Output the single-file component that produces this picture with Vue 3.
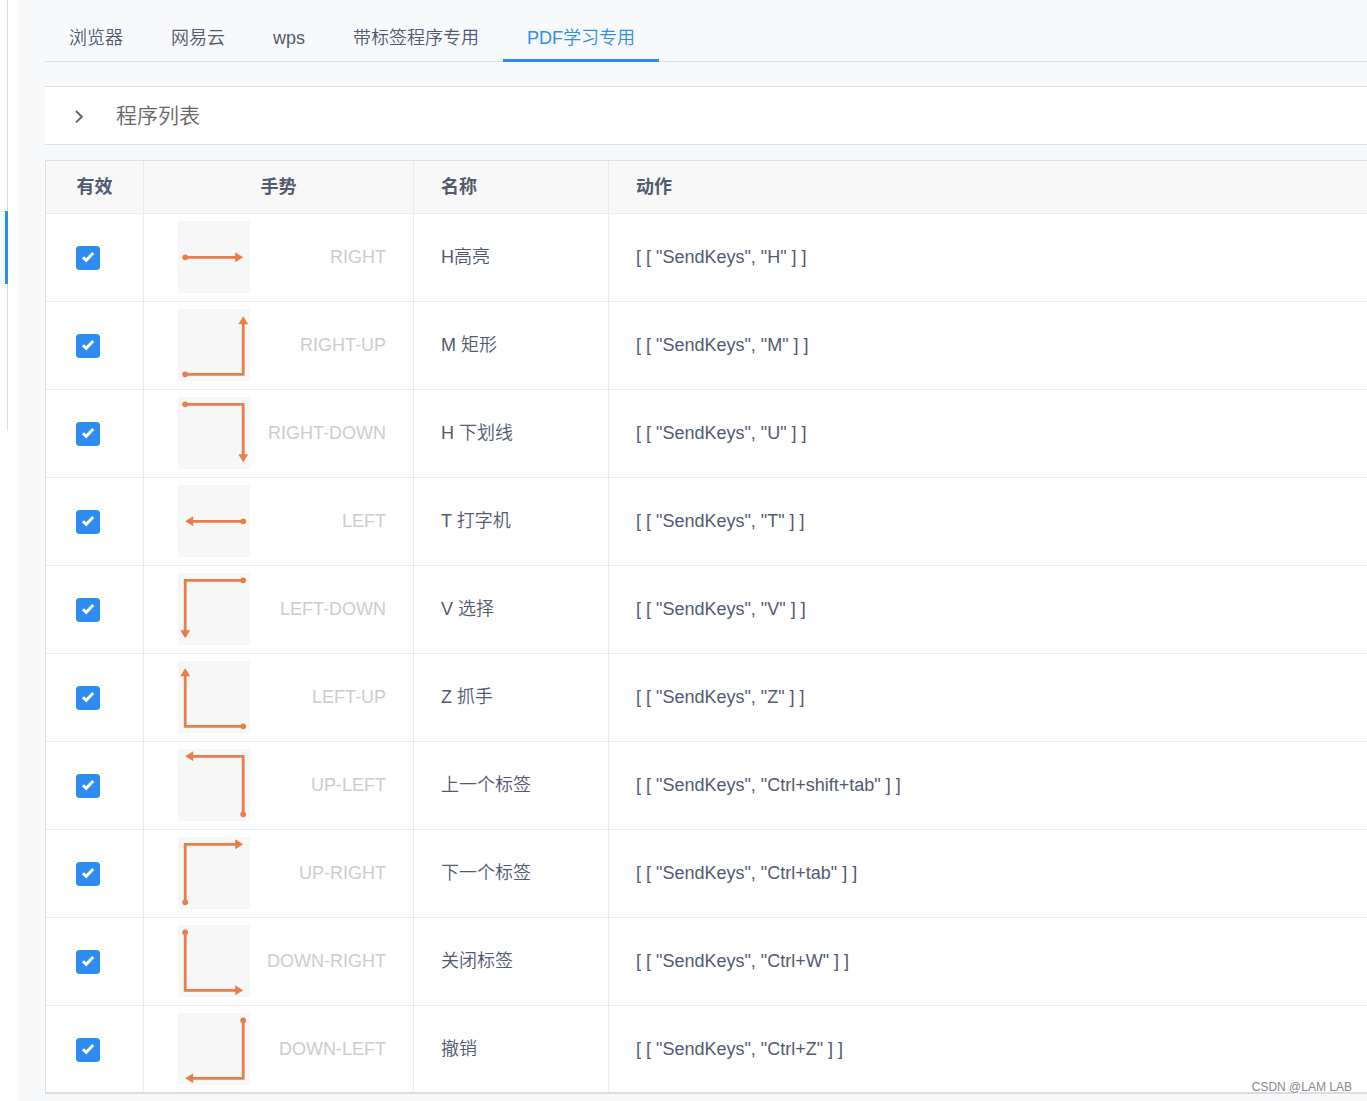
<script setup>
import { ref } from 'vue'

const tabs = ['浏览器', '网易云', 'wps', '带标签程序专用', 'PDF学习专用']
const activeTab = ref(4)
const expanded = ref(false)

const N = 7
const F = 65
const M = 36

const rows = ref([
  { gesture: 'RIGHT', name: 'H高亮', action: '[ [ "SendKeys", "H" ] ]', points: [[N, M], [F, M]] },
  { gesture: 'RIGHT-UP', name: 'M 矩形', action: '[ [ "SendKeys", "M" ] ]', points: [[N, F], [F, F], [F, N]] },
  { gesture: 'RIGHT-DOWN', name: 'H 下划线', action: '[ [ "SendKeys", "U" ] ]', points: [[N, N], [F, N], [F, F]] },
  { gesture: 'LEFT', name: 'T 打字机', action: '[ [ "SendKeys", "T" ] ]', points: [[F, M], [N, M]] },
  { gesture: 'LEFT-DOWN', name: 'V 选择', action: '[ [ "SendKeys", "V" ] ]', points: [[F, N], [N, N], [N, F]] },
  { gesture: 'LEFT-UP', name: 'Z 抓手', action: '[ [ "SendKeys", "Z" ] ]', points: [[F, F], [N, F], [N, N]] },
  { gesture: 'UP-LEFT', name: '上一个标签', action: '[ [ "SendKeys", "Ctrl+shift+tab" ] ]', points: [[F, F], [F, N], [N, N]] },
  { gesture: 'UP-RIGHT', name: '下一个标签', action: '[ [ "SendKeys", "Ctrl+tab" ] ]', points: [[N, F], [N, N], [F, N]] },
  { gesture: 'DOWN-RIGHT', name: '关闭标签', action: '[ [ "SendKeys", "Ctrl+W" ] ]', points: [[N, N], [N, F], [F, F]] },
  { gesture: 'DOWN-LEFT', name: '撤销', action: '[ [ "SendKeys", "Ctrl+Z" ] ]', points: [[F, N], [F, F], [N, F]] }
].map((row) => ({ ...row, enabled: true })))

// Direction of the last segment as a unit vector
function heading(points) {
  const [a, b] = points.slice(-2)
  return [Math.sign(b[0] - a[0]), Math.sign(b[1] - a[1])]
}

// The line stops inside the arrow head so that its tip stays sharp
function linePoints(points) {
  const [dx, dy] = heading(points)
  const end = points[points.length - 1]
  return [...points.slice(0, -1), [end[0] - dx * 6, end[1] - dy * 6]].join(' ')
}

function arrowPoints(points) {
  const [dx, dy] = heading(points)
  const [x, y] = points[points.length - 1]
  const bx = x - dx * 8
  const by = y - dy * 8
  return [[x, y], [bx - dy * 5, by + dx * 5], [bx + dy * 5, by - dx * 5]].join(' ')
}
</script>

<template>
  <div class="page">
    <aside class="rail">
      <div class="rail-menu">
        <div class="rail-active"></div>
      </div>
    </aside>

    <main class="content">
      <div class="tabs" role="tablist">
        <button
          v-for="(tab, i) in tabs"
          :key="tab"
          type="button"
          role="tab"
          class="tab"
          :class="{ active: i === activeTab }"
          :aria-selected="i === activeTab"
          @click="activeTab = i"
        >{{ tab }}</button>
      </div>

      <button type="button" class="collapse" :aria-expanded="expanded" @click="expanded = !expanded">
        <svg class="chevron" width="14" height="14" viewBox="0 0 14 14" aria-hidden="true">
          <path d="M4 2 L9.8 7.8 L4 13.4" fill="none" stroke="currentColor" stroke-width="2" />
        </svg>
        <span>程序列表</span>
      </button>

      <table class="grid">
        <colgroup>
          <col class="col-valid" />
          <col class="col-gesture" />
          <col class="col-name" />
          <col />
        </colgroup>
        <thead>
          <tr>
            <th class="center">有效</th>
            <th class="center">手势</th>
            <th>名称</th>
            <th>动作</th>
          </tr>
        </thead>
        <tbody>
          <tr v-for="row in rows" :key="row.gesture">
            <td class="valid">
              <label class="check">
                <input v-model="row.enabled" type="checkbox" :aria-label="row.name" />
                <svg width="24" height="24" viewBox="0 0 24 24" aria-hidden="true">
                  <path d="M7 11.2 L10.2 14.4 L17.2 7" fill="none" stroke="#fff" stroke-width="3" />
                </svg>
              </label>
            </td>
            <td>
              <div class="gesture">
                <svg class="sketch" width="72" height="72" viewBox="0 0 72 72" aria-hidden="true">
                  <g transform="translate(0.2 0.3)">
                    <polyline :points="linePoints(row.points)" fill="none" stroke="#e87e4b" stroke-width="2.8" />
                    <circle :cx="row.points[0][0]" :cy="row.points[0][1]" r="2.9" fill="#e87e4b" />
                    <polygon :points="arrowPoints(row.points)" fill="#e87e4b" />
                  </g>
                </svg>
                <span>{{ row.gesture }}</span>
              </div>
            </td>
            <td>{{ row.name }}</td>
            <td>{{ row.action }}</td>
          </tr>
        </tbody>
      </table>
    </main>

    <div class="watermark">CSDN @LAM LAB</div>
  </div>
</template>

<style>
body {
  margin: 0;
}
</style>

<style scoped>
.page {
  position: relative;
  display: flex;
  min-height: 100vh;
  overflow: hidden;
  background: #f8f9fb;
  color: #515a6e;
  font-family: "Liberation Sans", "Noto Sans CJK SC", sans-serif;
  font-size: 18px;
  font-weight: 350;
  line-height: 28px;
}

.page *,
.page {
  box-sizing: border-box;
}

.rail {
  flex: none;
  width: 18px;
  background: #fff;
}

.rail-menu {
  width: 8px;
  height: 431px;
  padding-top: 211px;
  background: linear-gradient(#dcdee2, #dcdee2) right / 1px 100% no-repeat;
}

.rail-active {
  height: 73px;
  border-right: 3px solid #2d8cf0;
  background: #f0faff;
}

.content {
  flex: 1;
  min-width: 0;
  padding: 14px 0 7px 27px;
}

button {
  margin: 0;
  border: 0;
  background: none;
  color: inherit;
  font: inherit;
  cursor: pointer;
}

.tabs {
  display: flex;
  height: 48px;
  box-shadow: inset 0 -1px #dcdee2;
}

.tab {
  padding: 0 24px;
  white-space: nowrap;
}

.tab.active {
  color: #2d8cf0;
  box-shadow: inset 0 -3px #2d8cf0;
}

.collapse {
  display: flex;
  align-items: center;
  gap: 30px;
  width: 100%;
  height: 59px;
  margin: 24px 0 15px;
  padding: 0 27px;
  border-top: 1px solid #dcdee2;
  border-bottom: 1px solid #dcdee2;
  background: #fff;
  color: #666;
  font-size: 21px;
  text-align: left;
}

.chevron {
  flex: none;
}

.grid {
  width: 100%;
  table-layout: fixed;
  border-collapse: separate;
  border-spacing: 0;
  border: solid #dcdee2;
  border-width: 1px 0 2px 1px;
  background: #fff;
}

.col-valid {
  width: 98px;
}

.col-gesture {
  width: 270px;
}

.col-name {
  width: 195px;
}

th,
td {
  padding: 0 27px;
  border-right: 1px solid #e8eaec;
  border-bottom: 1px solid #e8eaec;
  text-align: left;
  vertical-align: middle;
}

th:last-child,
td:last-child {
  border-right: 0;
}

th {
  height: 53px;
  background: #f8f8f9;
  font-weight: 700;
}

th.center {
  text-align: center;
}

td {
  height: 88px;
  padding-bottom: 1px;
}

td.valid {
  padding: 1px 30px 0;
}

tbody tr:last-child td {
  height: 86px;
  padding-bottom: 0;
  border-bottom: 0;
}

tbody tr:last-child td.valid {
  padding-top: 2px;
}

.check {
  display: grid;
  width: 24px;
  height: 24px;
  cursor: pointer;
}

.check input,
.check svg {
  grid-area: 1 / 1;
}

.check input {
  width: 24px;
  height: 24px;
  margin: 0;
  appearance: none;
  border: 1px solid #dcdee2;
  border-radius: 3px;
  background: #fff;
}

.check input:checked {
  border-color: #2d8cf0;
  background: #2d8cf0;
}

.check svg {
  pointer-events: none;
}

.gesture {
  display: flex;
  align-items: center;
  justify-content: space-between;
  padding-left: 7px;
  color: #ccc;
}

.sketch {
  background: #f7f7f7;
}

.watermark {
  position: absolute;
  right: 15px;
  bottom: 6px;
  color: #888;
  font-size: 12px;
  line-height: 16px;
  text-shadow: 1px 1px #fff;
}
</style>
